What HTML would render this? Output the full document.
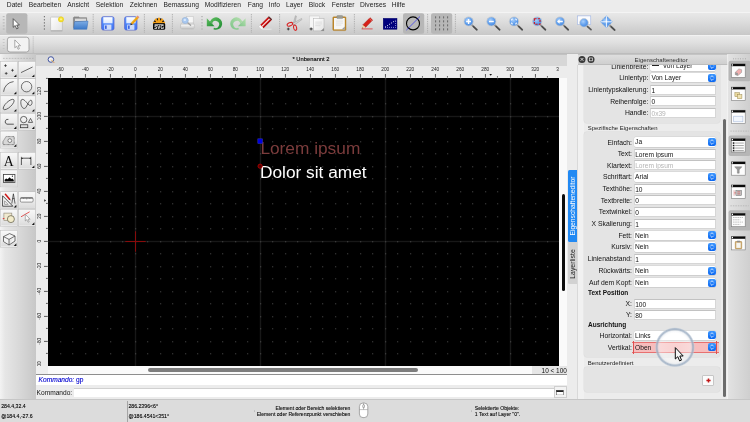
<!DOCTYPE html><html><head><meta charset="utf-8"><title>QCAD</title><style>
*{box-sizing:border-box;margin:0;padding:0}
html,body{width:750px;height:422px;overflow:hidden;background:#ececec}
body{position:relative;transform:translateZ(0);will-change:transform;font-family:"Liberation Sans",sans-serif;color:#1a1a1a;font-size:6.5px;line-height:1}
.a{position:absolute}
.t{position:absolute;white-space:nowrap;line-height:1}
.menu span{position:absolute;top:2.2px;font-size:6.7px;color:#1c1c1c;white-space:nowrap}
.tb1{left:0;top:12px;width:750px;height:22.6px;background:linear-gradient(#e8e8e8,#dedede 35%,#c8c8c8);border-top:0.6px solid #f4f4f4}
.tb2{left:0;top:34.6px;width:750px;height:19.2px;background:linear-gradient(#e9e9e9,#dfdfdf 40%,#cacaca);border-top:0.6px solid #f2f2f2;border-bottom:0.6px solid #bcbcbc}
.sel{background:#b9b9b9;border-radius:2px}
.sep{width:0;border-left:0.7px dotted #8a8a8a}
.lb{position:absolute;width:16.6px;height:16.6px;background:linear-gradient(#f7f7f7,#ececec 45%,#dadada);border:0.5px solid #fbfbfb;box-shadow:0 0 0 0.4px #c4c4c4}
.lb i{position:absolute;right:0.8px;bottom:0.8px;width:0;height:0;border-left:2.6px solid transparent;border-bottom:2.6px solid #111}
.lab{position:absolute;font-size:6.8px;text-align:right;white-space:nowrap;color:#111}
.inp{position:absolute;left:650px;width:66px;height:10px;background:#fff;border:0.5px solid #d6d6d6;border-top-color:#c2c2c2;font-size:6.6px;line-height:10.2px;padding-left:0.7px;overflow:hidden;white-space:nowrap;color:#111}
.cmb{position:absolute;left:650px;width:66px;height:9.4px;background:#fff;border-radius:2px;box-shadow:0 0 0 0.4px #cfcfcf,0 0.5px 0.6px #b8b8b8;font-size:6.6px;line-height:10.8px;padding-left:1.6px;white-space:nowrap;color:#111}
.cmb b{position:absolute;right:0.6px;top:0.7px;width:8px;height:8px;border-radius:2px;background:linear-gradient(#3e98ff,#0a66f0)}
</style></head><body>
<div class="a menu" style="left:0;top:0;width:750px;height:11.5px;background:#ececec">
<span style="left:6.8px">Datei</span>
<span style="left:28.8px">Bearbeiten</span>
<span style="left:67.3px">Ansicht</span>
<span style="left:95.8px">Selektion</span>
<span style="left:129.8px">Zeichnen</span>
<span style="left:163.6px">Bemassung</span>
<span style="left:204.8px">Modifizieren</span>
<span style="left:247.8px">Fang</span>
<span style="left:268.8px">Info</span>
<span style="left:286px">Layer</span>
<span style="left:308.8px">Block</span>
<span style="left:331.8px">Fenster</span>
<span style="left:360px">Diverses</span>
<span style="left:391.8px">Hilfe</span>
</div>
<div class="a tb1"></div><div class="a tb2"></div>
<svg class="a" style="left:0px;top:11.5px" width="750" height="42.5" viewBox="0 11.5 750 42.5"><defs><radialGradient id="lens" cx="0.4" cy="0.35" r="0.75"><stop offset="0" stop-color="#a8cffb"/><stop offset="0.55" stop-color="#5e9dec"/><stop offset="1" stop-color="#4b88da"/></radialGradient><linearGradient id="fold" x1="0" y1="0" x2="0" y2="1"><stop offset="0" stop-color="#7eaee6"/><stop offset="1" stop-color="#3b78c8"/></linearGradient><linearGradient id="sheet" x1="0" y1="0" x2="1" y2="1"><stop offset="0" stop-color="#ffffff"/><stop offset="1" stop-color="#e4e4e4"/></linearGradient><linearGradient id="flop" x1="0" y1="0" x2="0" y2="1"><stop offset="0" stop-color="#5f98ff"/><stop offset="1" stop-color="#3f74f4"/></linearGradient><radialGradient id="glow"><stop offset="0" stop-color="#ffffc0"/><stop offset="0.45" stop-color="#f6e23a"/><stop offset="1" stop-color="#e8d020"/></radialGradient></defs><rect x="6.2" y="12.8" width="21.2" height="20.4" rx="2" fill="#b7b7b7"/><rect x="403" y="12.8" width="21.2" height="20.4" rx="2" fill="#b7b7b7"/><rect x="431" y="12.8" width="21.2" height="20.4" rx="2" fill="#b7b7b7"/><rect x="2.75" y="15.799999999999999" width="1.9" height="0.8" fill="#adadad"/><rect x="2.75" y="18.900000000000002" width="1.9" height="0.8" fill="#adadad"/><rect x="2.75" y="22.0" width="1.9" height="0.8" fill="#adadad"/><rect x="2.75" y="25.0" width="1.9" height="0.8" fill="#adadad"/><rect x="2.75" y="28.1" width="1.9" height="0.8" fill="#adadad"/><rect x="43.85" y="15.649999999999999" width="1.1" height="1.1" fill="#5c5c5c"/><rect x="43.85" y="18.75" width="1.1" height="1.1" fill="#5c5c5c"/><rect x="43.85" y="21.849999999999998" width="1.1" height="1.1" fill="#5c5c5c"/><rect x="43.85" y="24.849999999999998" width="1.1" height="1.1" fill="#5c5c5c"/><rect x="43.85" y="27.95" width="1.1" height="1.1" fill="#5c5c5c"/><rect x="201.05" y="15.799999999999999" width="1.9" height="0.8" fill="#adadad"/><rect x="201.05" y="18.900000000000002" width="1.9" height="0.8" fill="#adadad"/><rect x="201.05" y="22.0" width="1.9" height="0.8" fill="#adadad"/><rect x="201.05" y="25.0" width="1.9" height="0.8" fill="#adadad"/><rect x="201.05" y="28.1" width="1.9" height="0.8" fill="#adadad"/><path d="M93.2 13.5V32.5" stroke="#acacac" stroke-width="0.9" stroke-dasharray="1.3 1"/><path d="M144.4 13.5V32.5" stroke="#acacac" stroke-width="0.9" stroke-dasharray="1.3 1"/><path d="M172.4 13.5V32.5" stroke="#acacac" stroke-width="0.9" stroke-dasharray="1.3 1"/><path d="M251.4 13.5V32.5" stroke="#acacac" stroke-width="0.9" stroke-dasharray="1.3 1"/><path d="M279.6 13.5V32.5" stroke="#acacac" stroke-width="0.9" stroke-dasharray="1.3 1"/><path d="M354.4 13.5V32.5" stroke="#acacac" stroke-width="0.9" stroke-dasharray="1.3 1"/><path d="M427.6 13.5V32.5" stroke="#acacac" stroke-width="0.9" stroke-dasharray="1.3 1"/><path d="M455.4 13.5V32.5" stroke="#acacac" stroke-width="0.9" stroke-dasharray="1.3 1"/><path d="M13.20 18.20 L13.20 26.80 L15.20 25.00 L16.70 28.40 L18.20 27.70 L16.70 24.50 L19.40 24.50Z" fill="#fff" stroke="#333" stroke-width="0.7" stroke-linejoin="round"/><rect x="50.6" y="16.6" width="11.8" height="13.6" rx="0.8" fill="url(#sheet)" stroke="#b5b5b5" stroke-width="0.6"/><path d="M50.8 30.4H62.4" stroke="#9a9a9a" stroke-width="0.6"/><circle cx="61" cy="18.8" r="2.9" fill="url(#glow)"/><path d="M73.4 17.2L74 16.4H79L79.6 17.2H86.6V27H73.4Z" fill="#8f8f8f" stroke="#6e6e6e" stroke-width="0.5"/><path d="M75 18.2H86V20.4H75Z" fill="#ededed"/><path d="M75 19.3H86" stroke="#a8a8a8" stroke-width="0.4"/><path d="M74.6 21.2L88 20.6L86.8 28.8H73.6Z" fill="url(#fold)" stroke="#3a6fb8" stroke-width="0.5" stroke-linejoin="round"/><defs><linearGradient id="flab" x1="0" y1="0" x2="0" y2="1"><stop offset="0" stop-color="#ffffff"/><stop offset="1" stop-color="#dbe8ff"/></linearGradient></defs><rect x="101.60000000000001" y="16.2" width="12.4" height="13.4" rx="1.8" fill="url(#flop)" stroke="#5360c8" stroke-width="0.7"/><rect x="103.30000000000001" y="16.7" width="9.2" height="6.1" fill="url(#flab)"/><rect x="104.2" y="24.1" width="7.2" height="5.2" fill="#cfdcf8"/><rect x="105.0" y="25" width="1.7" height="3.4" fill="#3f66e0"/><rect x="124.60000000000001" y="16.2" width="12.4" height="13.4" rx="1.8" fill="url(#flop)" stroke="#5360c8" stroke-width="0.7"/><rect x="126.30000000000001" y="16.7" width="9.2" height="6.1" fill="url(#flab)"/><rect x="127.2" y="24.1" width="7.2" height="5.2" fill="#cfdcf8"/><rect x="128.0" y="25" width="1.7" height="3.4" fill="#3f66e0"/><g transform="translate(130.3 24.8) rotate(-47.5)"><path d="M0 0L2.2 -1.2V1.2Z" fill="#3a2a1a"/><rect x="2.2" y="-1.25" width="8.6" height="2.5" fill="#f5b324"/><rect x="2.2" y="-0.2" width="8.6" height="0.9" fill="#e89a10"/><rect x="10.8" y="-1.25" width="1.3" height="2.5" fill="#e88a78"/></g><path d="M153 24A6 6.4 0 0 1 165 24Z" fill="#1a1208"/><path d="M157.84 23.31L153.86 22.25M158.26 22.65L155.74 19.19M159.00 22.40L159.00 18.00M159.74 22.65L162.26 19.19M160.16 23.31L164.14 22.25" stroke="#f5a21c" stroke-width="2.1" stroke-linecap="round"/><path d="M155.6 23.6A3.4 3.4 0 0 1 162.4 23.6Z" fill="#f5a21c"/><rect x="153" y="22.6" width="12.2" height="6.6" rx="1.5" fill="#080808"/><path d="M154.6 23.9H163.6" stroke="#d8d8d8" stroke-width="0.8"/><text x="159.1" y="28.5" font-size="4.7" font-weight="bold" fill="#f4f4f4" text-anchor="middle" font-family="Liberation Sans">SVG</text><rect x="186.2" y="16.2" width="7" height="6.6" fill="#f6f6f6" stroke="#c4c4c4" stroke-width="0.5"/><path d="M181.6 22.4H193.4L194.2 24V27.6H180.6V24Z" fill="#dcdcdc" stroke="#b4b4b4" stroke-width="0.5"/><path d="M181 25.2H194" stroke="#f6f6f6" stroke-width="0.8"/><path d="M181.4 28.4H193.6" stroke="#bcbcbc" stroke-width="0.9"/><path d="M187.4 22L190.6 24.8" stroke="#a0a0a0" stroke-width="1.3" stroke-linecap="round"/><circle cx="185.2" cy="20" r="3.1" fill="#a8c8f0" stroke="#9cb4d4" stroke-width="0.7"/><circle cx="184.8" cy="19.4" r="1.2" fill="#d8e8fb"/><defs><linearGradient id="gu" x1="0" y1="0" x2="1" y2="1"><stop offset="0" stop-color="#62c062"/><stop offset="1" stop-color="#1c8a30"/></linearGradient><linearGradient id="gr" x1="0" y1="0" x2="1" y2="1"><stop offset="0" stop-color="#b8e0b0"/><stop offset="1" stop-color="#7cc488"/></linearGradient></defs><g fill="url(#gu)"><path d="M209.4 20.4L210.38 20.38A6.2 6.2 0 1 1 213.4 28.7L213.98 27.36A3.6 3.6 0 1 0 212.24 22.58L212.8 23.9Z"/><path d="M206.8 17.7V25.7H214.5Z"/></g><g transform="translate(472.8 0) scale(-1 1)" fill="url(#gr)"><path d="M229.8 20.4L230.78 20.38A6.2 6.2 0 1 1 233.8 28.7L234.38 27.36A3.6 3.6 0 1 0 232.64000000000001 22.58L233.20000000000002 23.9Z"/><path d="M227.20000000000002 17.7V25.7H234.9Z"/></g><path d="M262 28.7H271.6" stroke="#e6e6e6" stroke-width="1"/><g transform="translate(260.1 27.7) rotate(-45)"><rect x="0" y="-2.3" width="2.8" height="4.6" rx="0.8" fill="#f6f6f6" stroke="#b8b8b8" stroke-width="0.4"/><rect x="2.6" y="-2.3" width="11" height="4.6" fill="#cc1212"/><rect x="2.6" y="-0.55" width="11" height="1.2" fill="#fbeaea"/><rect x="2.6" y="1.5" width="11" height="0.8" fill="#a00808"/><rect x="13.4" y="-2.3" width="1.4" height="4.6" rx="0.4" fill="#5a2424"/></g><path d="M293 24L295.4 15.2L296.4 15.6L294.6 24.6Z" fill="#c8c8c8" stroke="#8e8e8e" stroke-width="0.4"/><path d="M292.6 23L301.6 18L302 19L294 24.6Z" fill="#d4d4d4" stroke="#8e8e8e" stroke-width="0.4"/><ellipse cx="289.9" cy="23.8" rx="2.9" ry="1.6" transform="rotate(-22 289.9 23.8)" fill="none" stroke="#d82424" stroke-width="1.05"/><ellipse cx="295.1" cy="27.2" rx="1.5" ry="2.7" transform="rotate(-12 295.1 27.2)" fill="none" stroke="#d82424" stroke-width="1.05"/><path d="M286.9 28.5H289.7M288.3 27.1V29.9" stroke="#111" stroke-width="0.7"/><rect x="309.4" y="15.5" width="10.2" height="12.6" fill="#f6f6f6" stroke="#c6c6c6" stroke-width="0.5"/><rect x="313.4" y="18.2" width="10.6" height="12.2" fill="url(#sheet)" stroke="#b0b0b0" stroke-width="0.5"/><path d="M315.2 21.6H322M315.2 23.4H322M315.2 25.2H320.6" stroke="#cdcdcd" stroke-width="0.5"/><path d="M320.6 30.4L324 27.6V30.4Z" fill="#8e8e8e"/><path d="M309.6 28.4H312.6M311.1 26.9V29.9" stroke="#111" stroke-width="0.7"/><rect x="332.8" y="16.3" width="13.2" height="13.8" rx="1" fill="#bf8a2c" stroke="#a87418" stroke-width="0.4"/><rect x="334" y="17.5" width="10.8" height="11.4" fill="#f6f6f6"/><path d="M336 20.6H343M336 22.6H343M336 24.6H341.4" stroke="#cfcfcf" stroke-width="0.5"/><path d="M341.6 28.9L344.8 26V28.9Z" fill="#9a9a9a"/><rect x="336.8" y="15" width="6" height="3.1" rx="0.9" fill="#9c9c94" stroke="#84847c" stroke-width="0.4"/><path d="M370 17.2L372.6 19.6L365.6 26.8L362.8 24.4Z" fill="#d82018" stroke="#9c1008" stroke-width="0.5"/><path d="M362.8 24.4L365.6 26.8L361.8 28Z" fill="#f2d0a0"/><path d="M361.8 28L362.6 26.9L363.2 27.6Z" fill="#222"/><path d="M369.4 18.2L371.8 20.4" stroke="#f6b0a8" stroke-width="0.5"/><path d="M361.6 28.4H372.6" stroke="#e02020" stroke-width="0.7"/><rect x="383.2" y="17.8" width="13.8" height="11" fill="#00007c" stroke="#000060" stroke-width="0.4"/><path d="M385.2 26.6L395.6 19.8" stroke="#ffffff" stroke-width="1" stroke-dasharray="1 1.4"/><path d="M385 26.9H395.6V19.6" fill="none" stroke="#b8b8f4" stroke-width="0.8" stroke-dasharray="0.9 1.1"/><circle cx="413" cy="22.9" r="6.5" fill="none" stroke="#000" stroke-width="1.1"/><path d="M406.4 29.6L420 16" stroke="#1c1cff" stroke-width="0.6"/><path d="M435.6 15.8V30" stroke="#5c5c5c" stroke-width="0.85" stroke-dasharray="2.1 1.9"/><path d="M439.6 15.8V30" stroke="#5c5c5c" stroke-width="0.85" stroke-dasharray="2.1 1.9"/><path d="M443.6 15.8V30" stroke="#5c5c5c" stroke-width="0.85" stroke-dasharray="2.1 1.9"/><path d="M447.6 15.8V30" stroke="#5c5c5c" stroke-width="0.85" stroke-dasharray="2.1 1.9"/><path d="M471.8 24.4L476.8 29.2" stroke="#8a8a8a" stroke-width="1.9" stroke-linecap="round"/><path d="M473.40000000000003 26L476.8 29.2" stroke="#4a4a4a" stroke-width="1.5" stroke-linecap="round"/><circle cx="468.6" cy="21" r="4.6" fill="url(#lens)" stroke="#c4c8cc" stroke-width="0.8"/><path d="M466.20000000000005 21H471.0M468.6 18.6V23.4" stroke="#fff" stroke-width="1.4"/><path d="M494.59999999999997 24.4L499.59999999999997 29.2" stroke="#8a8a8a" stroke-width="1.9" stroke-linecap="round"/><path d="M496.2 26L499.59999999999997 29.2" stroke="#4a4a4a" stroke-width="1.5" stroke-linecap="round"/><circle cx="491.4" cy="21" r="4.6" fill="url(#lens)" stroke="#c4c8cc" stroke-width="0.8"/><path d="M489.0 21H493.79999999999995" stroke="#fff" stroke-width="1.4"/><path d="M517.2 24.4L522.2 29.2" stroke="#8a8a8a" stroke-width="1.9" stroke-linecap="round"/><path d="M518.8 26L522.2 29.2" stroke="#4a4a4a" stroke-width="1.5" stroke-linecap="round"/><circle cx="514" cy="21" r="4.6" fill="url(#lens)" stroke="#c4c8cc" stroke-width="0.8"/><path d="M511.6 20V18.6H513M515 18.6H516.4V20M516.4 22V23.4H515M513 23.4H511.6V22" fill="none" stroke="#fff" stroke-width="0.9"/><path d="M540.4000000000001 24.4L545.4000000000001 29.2" stroke="#8a8a8a" stroke-width="1.9" stroke-linecap="round"/><path d="M542.0 26L545.4000000000001 29.2" stroke="#4a4a4a" stroke-width="1.5" stroke-linecap="round"/><circle cx="537.2" cy="21" r="4.6" fill="url(#lens)" stroke="#c4c8cc" stroke-width="0.8"/><rect x="534.4000000000001" y="18.2" width="5.6" height="5.6" fill="none" stroke="#d81818" stroke-width="1.1" stroke-dasharray="2.2 1.2"/><path d="M563.2 24.4L568.2 29.2" stroke="#8a8a8a" stroke-width="1.9" stroke-linecap="round"/><path d="M564.8 26L568.2 29.2" stroke="#4a4a4a" stroke-width="1.5" stroke-linecap="round"/><circle cx="560" cy="21" r="4.6" fill="url(#lens)" stroke="#c4c8cc" stroke-width="0.8"/><path d="M557 21L559.6 18.8V20.2H562.8V21.8H559.6V23.2Z" fill="#fff"/><rect x="577.4" y="15.4" width="13.4" height="8.8" fill="#fafbfe" stroke="#8aa4dc" stroke-width="0.5"/><path d="M587 25.6L591 29.2" stroke="#5a5a5a" stroke-width="1.7" stroke-linecap="round"/><circle cx="584" cy="22.3" r="4.3" fill="url(#lens)" stroke="#c4c8cc" stroke-width="0.7"/><path d="M609.6 24.7L614.6 29.5" stroke="#8a8a8a" stroke-width="1.9" stroke-linecap="round"/><path d="M611.1999999999999 26.3L614.6 29.5" stroke="#4a4a4a" stroke-width="1.5" stroke-linecap="round"/><circle cx="606.4" cy="21.3" r="4.6" fill="url(#lens)" stroke="#c4c8cc" stroke-width="0.8"/><path d="M600.1999999999999 21.3l2.6 -2.4v4.8zM612.6 21.3l-2.6 -2.4v4.8zM606.4 15.100000000000001l-2.4 2.6h4.8zM606.4 27.5l-2.4 -2.6h4.8z" fill="#5e9dec"/><path d="M600.8 21.3H612.0M606.4 15.700000000000001V26.9" stroke="#fff" stroke-width="0.9"/><rect x="2.75" y="38.5" width="1.9" height="0.8" fill="#c2c2c2"/><rect x="2.75" y="41.6" width="1.9" height="0.8" fill="#c2c2c2"/><rect x="2.75" y="44.6" width="1.9" height="0.8" fill="#c2c2c2"/><rect x="2.75" y="47.6" width="1.9" height="0.8" fill="#c2c2c2"/><path d="M33.2 36V52.5" stroke="#9c9c9c" stroke-width="0.7" stroke-dasharray="0.9 1.1"/><rect x="7.4" y="36.7" width="21.6" height="14.8" rx="2.6" fill="#f2f2f2" stroke="#8a8a8a" stroke-width="0.7"/><path d="M14.80 39.40 L14.80 47.31 L16.64 45.66 L18.02 48.78 L19.40 48.14 L18.02 45.20 L20.50 45.20Z" fill="#fcfcfc" stroke="#777" stroke-width="0.6" stroke-linejoin="round"/></svg>
<div class="a" style="left:0;top:53.5px;width:36px;height:345px;background:linear-gradient(90deg,#f3f3f3,#e6e6e6 14%,#d8d8d8 55%,#c7c7c7)"></div>
<svg class="a" style="left:0;top:57px" width="36" height="3" viewBox="0 57 36 3"><path d="M3 58.4H33.5" stroke="#a6a6a6" stroke-width="0.6" stroke-dasharray="1.7 1.2"/></svg>
<svg class="a" style="left:0px;top:60px" width="37" height="190" viewBox="0 60 37 190"><defs><linearGradient id="lbg" x1="0" y1="0" x2="0" y2="1"><stop offset="0" stop-color="#f8f8f8"/><stop offset="0.5" stop-color="#ececec"/><stop offset="1" stop-color="#dadada"/></linearGradient></defs><rect x="0.9" y="61.8" width="16.3" height="16.0" fill="url(#lbg)" stroke="#fdfdfd" stroke-width="0.5"/><rect x="0.45" y="61.349999999999994" width="17.2" height="16.9" fill="none" stroke="#bcbcbc" stroke-width="0.5"/><path d="M16.4 74.39999999999999V77.0H13.799999999999999Z" fill="#111"/><rect x="18.9" y="61.8" width="16.3" height="16.0" fill="url(#lbg)" stroke="#fdfdfd" stroke-width="0.5"/><rect x="18.45" y="61.349999999999994" width="17.2" height="16.9" fill="none" stroke="#bcbcbc" stroke-width="0.5"/><path d="M34.400000000000006 74.39999999999999V77.0H31.800000000000004Z" fill="#111"/><rect x="0.9" y="79.0" width="16.3" height="16.0" fill="url(#lbg)" stroke="#fdfdfd" stroke-width="0.5"/><rect x="0.45" y="78.55" width="17.2" height="16.9" fill="none" stroke="#bcbcbc" stroke-width="0.5"/><path d="M16.4 91.6V94.2H13.799999999999999Z" fill="#111"/><rect x="18.9" y="79.0" width="16.3" height="16.0" fill="url(#lbg)" stroke="#fdfdfd" stroke-width="0.5"/><rect x="18.45" y="78.55" width="17.2" height="16.9" fill="none" stroke="#bcbcbc" stroke-width="0.5"/><path d="M34.400000000000006 91.6V94.2H31.800000000000004Z" fill="#111"/><rect x="0.9" y="96.3" width="16.3" height="16.0" fill="url(#lbg)" stroke="#fdfdfd" stroke-width="0.5"/><rect x="0.45" y="95.85" width="17.2" height="16.9" fill="none" stroke="#bcbcbc" stroke-width="0.5"/><path d="M16.4 108.89999999999999V111.5H13.799999999999999Z" fill="#111"/><rect x="18.9" y="96.3" width="16.3" height="16.0" fill="url(#lbg)" stroke="#fdfdfd" stroke-width="0.5"/><rect x="18.45" y="95.85" width="17.2" height="16.9" fill="none" stroke="#bcbcbc" stroke-width="0.5"/><path d="M34.400000000000006 108.89999999999999V111.5H31.800000000000004Z" fill="#111"/><rect x="0.9" y="113.7" width="16.3" height="16.0" fill="url(#lbg)" stroke="#fdfdfd" stroke-width="0.5"/><rect x="0.45" y="113.25" width="17.2" height="16.9" fill="none" stroke="#bcbcbc" stroke-width="0.5"/><path d="M16.4 126.29999999999998V128.89999999999998H13.799999999999999Z" fill="#111"/><rect x="18.9" y="113.7" width="16.3" height="16.0" fill="url(#lbg)" stroke="#fdfdfd" stroke-width="0.5"/><rect x="18.45" y="113.25" width="17.2" height="16.9" fill="none" stroke="#bcbcbc" stroke-width="0.5"/><path d="M34.400000000000006 126.29999999999998V128.89999999999998H31.800000000000004Z" fill="#111"/><rect x="0.9" y="131.6" width="16.3" height="16.0" fill="url(#lbg)" stroke="#fdfdfd" stroke-width="0.5"/><rect x="0.45" y="131.15" width="17.2" height="16.9" fill="none" stroke="#bcbcbc" stroke-width="0.5"/><path d="M16.4 144.2V146.79999999999998H13.799999999999999Z" fill="#111"/><rect x="0.9" y="152.8" width="16.3" height="16.0" fill="url(#lbg)" stroke="#fdfdfd" stroke-width="0.5"/><rect x="0.45" y="152.35000000000002" width="17.2" height="16.9" fill="none" stroke="#bcbcbc" stroke-width="0.5"/><rect x="18.9" y="152.8" width="16.3" height="16.0" fill="url(#lbg)" stroke="#fdfdfd" stroke-width="0.5"/><rect x="18.45" y="152.35000000000002" width="17.2" height="16.9" fill="none" stroke="#bcbcbc" stroke-width="0.5"/><path d="M34.400000000000006 165.4V168.0H31.800000000000004Z" fill="#111"/><rect x="0.9" y="170.4" width="16.3" height="16.0" fill="url(#lbg)" stroke="#fdfdfd" stroke-width="0.5"/><rect x="0.45" y="169.95000000000002" width="17.2" height="16.9" fill="none" stroke="#bcbcbc" stroke-width="0.5"/><rect x="0.9" y="192.2" width="16.3" height="16.0" fill="url(#lbg)" stroke="#fdfdfd" stroke-width="0.5"/><rect x="0.45" y="191.75" width="17.2" height="16.9" fill="none" stroke="#bcbcbc" stroke-width="0.5"/><path d="M16.4 204.79999999999998V207.39999999999998H13.799999999999999Z" fill="#111"/><rect x="18.9" y="192.2" width="16.3" height="16.0" fill="url(#lbg)" stroke="#fdfdfd" stroke-width="0.5"/><rect x="18.45" y="191.75" width="17.2" height="16.9" fill="none" stroke="#bcbcbc" stroke-width="0.5"/><rect x="0.9" y="209.7" width="16.3" height="16.0" fill="url(#lbg)" stroke="#fdfdfd" stroke-width="0.5"/><rect x="0.45" y="209.25" width="17.2" height="16.9" fill="none" stroke="#bcbcbc" stroke-width="0.5"/><rect x="18.9" y="209.7" width="16.3" height="16.0" fill="url(#lbg)" stroke="#fdfdfd" stroke-width="0.5"/><rect x="18.45" y="209.25" width="17.2" height="16.9" fill="none" stroke="#bcbcbc" stroke-width="0.5"/><path d="M34.400000000000006 222.29999999999998V224.89999999999998H31.800000000000004Z" fill="#111"/><rect x="0.9" y="230.7" width="16.3" height="16.0" fill="url(#lbg)" stroke="#fdfdfd" stroke-width="0.5"/><rect x="0.45" y="230.25" width="17.2" height="16.9" fill="none" stroke="#bcbcbc" stroke-width="0.5"/><path d="M16.4 243.29999999999998V245.89999999999998H13.799999999999999Z" fill="#111"/><path d="M4.1 65.6H6.9M5.5 64.19999999999999V67.0" stroke="#111" stroke-width="0.6"/><path d="M11.1 70.3H13.9M12.5 68.89999999999999V71.7" stroke="#111" stroke-width="0.6"/><path d="M4.800000000000001 73.4H7.6M6.2 72.0V74.80000000000001" stroke="#111" stroke-width="0.6"/><path d="M21 72.6L32.6 67" stroke="#2c2c2c" stroke-width="0.7" fill="none"/><path d="M3.6 91.8A11 11 0 0 1 13.6 81.6" stroke="#444" stroke-width="0.8" fill="none"/><circle cx="26.6" cy="86.7" r="5.2" stroke="#444" stroke-width="0.75" fill="none"/><ellipse cx="8.7" cy="104.5" rx="7" ry="2.7" transform="rotate(-43 8.7 104.5)" stroke="#333" stroke-width="0.7" fill="none"/><path d="M21.2 100C19.6 105 23.4 111.4 26.2 107C27.8 104 30.2 98.4 31.6 100.6C33 103.4 31 106.6 29 105C26.4 102.6 23.4 97.6 21.2 100Z" stroke="#2c2c2c" stroke-width="0.7" fill="none"/><path d="M8.4 119.4A2.45 2.45 0 0 0 7 124.2H13.8" stroke="#333" stroke-width="0.8" fill="none"/><circle cx="23.7" cy="119.6" r="3.2" stroke="#2c2c2c" stroke-width="0.7" fill="none"/><path d="M28.4 122.4H32.6L30.5 118.4Z" stroke="#2c2c2c" stroke-width="0.7" fill="none"/><rect x="20.4" y="124.8" width="7.4" height="2.9" stroke="#2c2c2c" stroke-width="0.7" fill="none"/><path d="M3 141.6L6 136.6H14.2V144.6H3Z" fill="#d8d8d8" stroke="#444" stroke-width="0.7" stroke-dasharray="0.8 0.5"/><circle cx="9.8" cy="140.6" r="1.9" fill="#f4f4f4" stroke="#444" stroke-width="0.6"/><text x="8.8" y="165.7" font-family="Liberation Serif" font-size="13.8" text-anchor="middle" fill="#0a0a0a">A</text><path d="M21.4 165V158.2H30.9V165" stroke="#333" stroke-width="0.8" fill="none"/><path d="M21.4 157.4l1.8 0.8l-1.8 0.8zM30.9 157.4l-1.8 0.8l1.8 0.8z" fill="#111"/><path d="M21.4 156.8V158M30.9 156.8V158" stroke="#333" stroke-width="0.6"/><rect x="3.5" y="174.4" width="11.4" height="8.2" fill="#fff" stroke="#3c3c3c" stroke-width="0.8"/><path d="M4.6 181.6V179.8L6.2 178.4L7.6 179.2L9.6 177.2L11.2 179L12.4 178.4L13.8 180V181.6Z" fill="#0a0a0a"/><circle cx="12.4" cy="176.2" r="0.6" fill="#111"/><path d="M2.6 195.8V206.2H12.8Z" fill="#f6f6f6" stroke="#2a2a2a" stroke-width="0.8"/><path d="M4.6 200.8V204.4H8.2Z" fill="none" stroke="#555" stroke-width="0.5"/><path d="M5.4 194.2L9.6 199.2" stroke="#d01818" stroke-width="1.5" stroke-linecap="round"/><path d="M9.6 199.2L10.6 200.4" stroke="#333" stroke-width="0.7"/><path d="M13.4 193.8L11.8 203.6M13.4 193.8L15 203.6M12.4 198.6H14.4" stroke="#2a2a2a" stroke-width="0.7" fill="none"/><rect x="20.3" y="197.8" width="12.8" height="4.3" rx="1.2" fill="#fafafa" stroke="#5a5a5a" stroke-width="0.6"/><path d="M20.6 198H32.8" stroke="#222" stroke-width="0.7"/><path d="M26.7 198V199.6M23.6 198V199M29.8 198V199" stroke="#555" stroke-width="0.4"/><rect x="3.9" y="213.1" width="7.9" height="7.4" fill="#f1ead0" stroke="#8c8474" stroke-width="0.6"/><circle cx="10.9" cy="219.1" r="3.5" fill="#f3eccb" stroke="#5a5840" stroke-width="0.7"/><path d="M2.8 218.6H4.4" stroke="#e02020" stroke-width="0.9"/><path d="M21 216.8L29.6 211.8" stroke="#e03030" stroke-width="0.8"/><path d="M25.30 214.30 L25.30 221.01 L26.86 219.60 L28.03 222.26 L29.20 221.71 L28.03 219.21 L30.14 219.21Z" fill="#fbfbfb" stroke="#7a7a7a" stroke-width="0.55" stroke-linejoin="round"/><path d="M3.5 236.6L9.6 233.6L15 236L9 239.4ZM3.5 236.6V241.6L9 245V239.4M9 245L15 241V236" stroke="#3a3a3a" stroke-width="0.7" fill="#f4f4f4" stroke-linejoin="round"/></svg>
<div class="a" style="left:36px;top:53.5px;width:531px;height:12.5px;background:#d7d7d7;border-top:0.6px solid #c2c2c2"></div>
<div class="t" style="left:292px;top:57.2px;font-size:5.8px;color:#000;width:38px;text-align:center;-webkit-text-stroke:0.12px #000">* Unbenannt 2</div>
<svg class="a" style="left:46px;top:55px" width="10" height="9" viewBox="46 55 10 9"><circle cx="50.9" cy="59.5" r="2.8" fill="#e8eaf2" stroke="#4456a0" stroke-width="1"/><circle cx="50.4" cy="59.2" r="1.1" fill="#fafafa"/><path d="M51.2 59.8L53.6 62.2" stroke="#eeb040" stroke-width="0.9" stroke-linecap="round"/><path d="M53.5 62.1L54 62.7" stroke="#c86040" stroke-width="0.7"/></svg>
<div class="a" style="left:36px;top:66px;width:531px;height:11.5px;background:#ececec"></div>
<div class="a" style="left:36px;top:66px;width:11.5px;height:300px;background:#ececec"></div>
<svg class="a" style="left:47.8px;top:77.7px" width="511.2" height="288.1" viewBox="47.8 77.7 511.2 288.1">
<defs><pattern id="dots" x="135" y="241" width="25" height="25" patternUnits="userSpaceOnUse"><path d="M0 0h1v1h-1zM12 0h1v1h-1zM0 12h1v1h-1zM12 12h1v1h-1z" fill="#525252"/></pattern></defs>
<rect x="47.8" y="77.7" width="511.2" height="288.1" fill="#000"/>
<rect x="134.60000000000002" y="77.7" width="1.4" height="288.1" fill="#181818"/>
<rect x="259.6" y="77.7" width="1.4" height="288.1" fill="#181818"/>
<rect x="384.6" y="77.7" width="1.4" height="288.1" fill="#181818"/>
<rect x="509.6" y="77.7" width="1.4" height="288.1" fill="#181818"/>
<rect x="47.8" y="240.5" width="511.2" height="1.4" fill="#181818"/>
<rect x="47.8" y="115.49999999999999" width="511.2" height="1.4" fill="#181818"/>
<rect x="47.8" y="77.7" width="511.2" height="288.1" fill="url(#dots)"/>
<path d="M125.1 241.2H145.5M135.3 231V251.4" stroke="#8a0c0c" stroke-width="1" fill="none"/>
<text x="260.2" y="153.4" font-family="Liberation Sans" font-size="17.3" fill="#7c3c3c">Lorem ipsum</text>
<text x="259.8" y="178.2" font-family="Liberation Sans" font-size="17.3" fill="#fff">Dolor sit amet</text>
<rect x="257.6" y="138.5" width="4.8" height="4.8" fill="#0000e0" stroke="#3a3aa0" stroke-width="0.5"/>
<circle cx="259.9" cy="165.9" r="2.1" fill="#500" stroke="#b00000" stroke-width="0.9"/>
</svg>
<svg class="a" style="left:36px;top:66px" width="523.2" height="299.8" viewBox="36 66 523.2 299.8">
<path d="M60.45 74V77.6 M72.45 76.1V77.6 M85.45 74V77.6 M97.45 76.1V77.6 M110.45 74V77.6 M122.45 76.1V77.6 M135.45 74V77.6 M147.45 76.1V77.6 M160.45 74V77.6 M172.45 76.1V77.6 M185.45 74V77.6 M197.45 76.1V77.6 M210.45 74V77.6 M222.45 76.1V77.6 M235.45 74V77.6 M247.45 76.1V77.6 M260.45 74V77.6 M272.45 76.1V77.6 M285.45 74V77.6 M297.45 76.1V77.6 M310.45 74V77.6 M322.45 76.1V77.6 M335.45 74V77.6 M347.45 76.1V77.6 M360.45 74V77.6 M372.45 76.1V77.6 M385.45 74V77.6 M397.45 76.1V77.6 M410.45 74V77.6 M422.45 76.1V77.6 M435.45 74V77.6 M447.45 76.1V77.6 M460.45 74V77.6 M472.45 76.1V77.6 M485.45 74V77.6 M497.45 76.1V77.6 M510.45 74V77.6 M522.45 76.1V77.6 M535.45 74V77.6 M547.45 76.1V77.6 M46 353.4H47.8 M44 341.4H47.8 M46 328.4H47.8 M44 316.4H47.8 M46 303.4H47.8 M44 291.4H47.8 M46 278.4H47.8 M44 266.4H47.8 M46 253.4H47.8 M44 241.4H47.8 M46 228.4H47.8 M44 216.4H47.8 M46 203.4H47.8 M44 191.4H47.8 M46 178.4H47.8 M44 166.4H47.8 M46 153.4H47.8 M44 141.4H47.8 M46 128.4H47.8 M44 116.4H47.8 M46 103.4H47.8 M44 91.4H47.8 M46 78.4H47.8" stroke="#2a2a2a" stroke-width="0.75" fill="none"/>
<text x="60.30000000000001" y="71" font-size="4.8" text-anchor="middle" fill="#222" font-family="Liberation Sans">-60</text>
<text x="85.30000000000001" y="71" font-size="4.8" text-anchor="middle" fill="#222" font-family="Liberation Sans">-40</text>
<text x="110.30000000000001" y="71" font-size="4.8" text-anchor="middle" fill="#222" font-family="Liberation Sans">-20</text>
<text x="135.3" y="71" font-size="4.8" text-anchor="middle" fill="#222" font-family="Liberation Sans">0</text>
<text x="160.3" y="71" font-size="4.8" text-anchor="middle" fill="#222" font-family="Liberation Sans">20</text>
<text x="185.3" y="71" font-size="4.8" text-anchor="middle" fill="#222" font-family="Liberation Sans">40</text>
<text x="210.3" y="71" font-size="4.8" text-anchor="middle" fill="#222" font-family="Liberation Sans">60</text>
<text x="235.3" y="71" font-size="4.8" text-anchor="middle" fill="#222" font-family="Liberation Sans">80</text>
<text x="260.3" y="71" font-size="4.8" text-anchor="middle" fill="#222" font-family="Liberation Sans">100</text>
<text x="285.3" y="71" font-size="4.8" text-anchor="middle" fill="#222" font-family="Liberation Sans">120</text>
<text x="310.3" y="71" font-size="4.8" text-anchor="middle" fill="#222" font-family="Liberation Sans">140</text>
<text x="335.3" y="71" font-size="4.8" text-anchor="middle" fill="#222" font-family="Liberation Sans">160</text>
<text x="360.3" y="71" font-size="4.8" text-anchor="middle" fill="#222" font-family="Liberation Sans">180</text>
<text x="385.3" y="71" font-size="4.8" text-anchor="middle" fill="#222" font-family="Liberation Sans">200</text>
<text x="410.3" y="71" font-size="4.8" text-anchor="middle" fill="#222" font-family="Liberation Sans">220</text>
<text x="435.3" y="71" font-size="4.8" text-anchor="middle" fill="#222" font-family="Liberation Sans">240</text>
<text x="460.3" y="71" font-size="4.8" text-anchor="middle" fill="#222" font-family="Liberation Sans">260</text>
<text x="485.3" y="71" font-size="4.8" text-anchor="middle" fill="#222" font-family="Liberation Sans">280</text>
<text x="510.3" y="71" font-size="4.8" text-anchor="middle" fill="#222" font-family="Liberation Sans">300</text>
<text x="535.3" y="71" font-size="4.8" text-anchor="middle" fill="#222" font-family="Liberation Sans">320</text>
<text x="560.3" y="71" font-size="4.8" text-anchor="middle" fill="#222" font-family="Liberation Sans">340</text>
<text transform="translate(40.9 366.2) rotate(-90)" font-size="4.8" text-anchor="middle" fill="#222" font-family="Liberation Sans">-100</text>
<text transform="translate(40.9 341.2) rotate(-90)" font-size="4.8" text-anchor="middle" fill="#222" font-family="Liberation Sans">-80</text>
<text transform="translate(40.9 316.2) rotate(-90)" font-size="4.8" text-anchor="middle" fill="#222" font-family="Liberation Sans">-60</text>
<text transform="translate(40.9 291.2) rotate(-90)" font-size="4.8" text-anchor="middle" fill="#222" font-family="Liberation Sans">-40</text>
<text transform="translate(40.9 266.2) rotate(-90)" font-size="4.8" text-anchor="middle" fill="#222" font-family="Liberation Sans">-20</text>
<text transform="translate(40.9 241.2) rotate(-90)" font-size="4.8" text-anchor="middle" fill="#222" font-family="Liberation Sans">0</text>
<text transform="translate(40.9 216.2) rotate(-90)" font-size="4.8" text-anchor="middle" fill="#222" font-family="Liberation Sans">20</text>
<text transform="translate(40.9 191.2) rotate(-90)" font-size="4.8" text-anchor="middle" fill="#222" font-family="Liberation Sans">40</text>
<text transform="translate(40.9 166.2) rotate(-90)" font-size="4.8" text-anchor="middle" fill="#222" font-family="Liberation Sans">60</text>
<text transform="translate(40.9 141.2) rotate(-90)" font-size="4.8" text-anchor="middle" fill="#222" font-family="Liberation Sans">80</text>
<text transform="translate(40.9 116.19999999999999) rotate(-90)" font-size="4.8" text-anchor="middle" fill="#222" font-family="Liberation Sans">100</text>
<text transform="translate(40.9 91.19999999999999) rotate(-90)" font-size="4.8" text-anchor="middle" fill="#222" font-family="Liberation Sans">120</text>
<path d="M489.4 74h2.6l-1.3 1.7z" fill="#111"/><path d="M44.3 199.2v2.6l1.7-1.3z" fill="#111"/>
</svg>
<div class="a" style="left:559px;top:77.5px;width:8px;height:288.5px;background:#fafafa"></div>
<div class="a" style="left:561.6px;top:193.5px;width:3.6px;height:97px;border-radius:2px;background:#0c0c0c"></div>
<div class="a" style="left:36px;top:365.8px;width:531px;height:8.4px;background:#efefef"></div>
<div class="a" style="left:47.5px;top:365.8px;width:484.5px;height:8.4px;background:#fafafa"></div>
<div class="a" style="left:148px;top:368.2px;width:270px;height:3.6px;border-radius:2px;background:#7d7d7d"></div>
<div class="a" style="left:532px;top:365.8px;width:35px;height:8.4px;background:#e6e6e6"></div>
<div class="t" style="left:541.6px;top:367.6px;font-size:6.45px;color:#111">10 &lt; 100</div>
<div class="a" style="left:36px;top:374.2px;width:531px;height:11.8px;background:#fff;border-top:0.8px solid #8e8e8e;border-bottom:0.6px solid #c8c8c8"></div>
<div class="t" style="left:38.6px;top:376.9px;font-size:6.6px;color:#0000d0;-webkit-text-stroke:0.12px #0000d0"><i>Kommando:</i> gp</div>
<div class="a" style="left:36px;top:385.4px;width:531px;height:13.3px;background:#ececec"></div>
<div class="t" style="left:36.6px;top:390.4px;font-size:6.6px;color:#111">Kommando:</div>
<div class="a" style="left:74px;top:387.8px;width:479.5px;height:9.2px;background:#fff;border-top:0.5px solid #d0d0d0"></div>
<div class="a" style="left:553.5px;top:386px;width:13.3px;height:12.4px;background:#f3f3f3;border:0.5px solid #cfcfcf"></div>
<svg class="a" style="left:556.4px;top:389.6px" width="7.6" height="5.4" viewBox="0 0 7.6 5.4"><rect x="0.3" y="0.3" width="7" height="4.8" fill="#fff" stroke="#555" stroke-width="0.6"/><rect x="0.3" y="0.3" width="7" height="1.7" fill="#222"/></svg>
<div class="a" style="left:567px;top:53.5px;width:10.5px;height:345px;background:#ececec"></div>
<div class="a" style="left:568px;top:170px;width:9.6px;height:72.3px;background:#2189f3;border-radius:1.5px 0 0 1.5px"></div>
<div class="a" style="left:568px;top:242.3px;width:9.6px;height:42.2px;background:#d2d2d2;border-radius:0 0 0 1.5px"></div>
<div class="t" style="left:572.9px;top:205.9px;font-size:6.7px;color:#fff;transform:translate(-50%,-50%) rotate(-90deg)">Eigenschafteneditor</div>
<div class="t" style="left:572.9px;top:264.2px;font-size:6.9px;color:#222;transform:translate(-50%,-50%) rotate(-90deg)">Layerliste</div>
<div class="a" style="left:577.5px;top:53.5px;width:150.5px;height:345px;background:#ececec"></div>
<div class="a" style="left:576.9px;top:64.5px;width:0.7px;height:334px;background:#d9d9d9"></div>
<div class="a" style="left:577.5px;top:64.5px;width:6.5px;height:334px;background:#f1f1f1"></div>
<div class="a" style="left:584px;top:60px;width:136px;height:62.5px;background:#e4e4e4;border-radius:0 0 3px 3px;box-shadow:0 0 0 0.4px #dadada"></div>
<div class="a" style="left:584px;top:131.5px;width:136px;height:225px;background:#e4e4e4;border-radius:3px 3px 3px 3px;box-shadow:0 0 0 0.4px #dadada"></div>
<div class="a" style="left:584px;top:367.4px;width:136px;height:24.9px;background:#e4e4e4;border-radius:3px 3px 3px 3px;box-shadow:0 0 0 0.4px #dadada"></div>
<div class="lab" style="right:101.70000000000005px;top:63.5px">Linienbreite:</div>
<div class="cmb" style="left:649.8px;width:66.5px;top:61.3px"><span style="display:inline-block;width:7px;border-top:0.6px solid #222;vertical-align:2px;margin:0 3.4px 0 1px"></span>Von Layer<b><svg style="position:absolute;left:0;top:0" width="8" height="8" viewBox="0 0 8 8"><path d="M2.6 3.1L4 1.7L5.4 3.1M2.6 5L4 6.4L5.4 5" fill="none" stroke="#fff" stroke-width="0.75" stroke-linecap="round" stroke-linejoin="round"/></svg></b></div>
<div class="lab" style="right:101.70000000000005px;top:75.3px">Linientyp:</div>
<div class="cmb" style="left:649.8px;width:66.5px;top:73.1px">Von Layer<b><svg style="position:absolute;left:0;top:0" width="8" height="8" viewBox="0 0 8 8"><path d="M2.6 3.1L4 1.7L5.4 3.1M2.6 5L4 6.4L5.4 5" fill="none" stroke="#fff" stroke-width="0.75" stroke-linecap="round" stroke-linejoin="round"/></svg></b></div>
<div class="lab" style="right:101.70000000000005px;top:87.0px">Linientypskalierung:</div>
<div class="inp" style="left:649.8px;width:66.5px;top:84.5px;color:#111">1</div>
<div class="lab" style="right:101.70000000000005px;top:98.7px">Reihenfolge:</div>
<div class="inp" style="left:649.8px;width:66.5px;top:96.2px;color:#111">0</div>
<div class="lab" style="right:101.70000000000005px;top:110.4px">Handle:</div>
<div class="inp" style="left:649.8px;width:66.5px;top:107.9px;color:#b4b4b4">0x39</div>
<div class="lab" style="right:118.0px;top:139.5px">Einfach:</div>
<div class="cmb" style="left:633.5px;width:82.79999999999995px;top:137.3px">Ja<b><svg style="position:absolute;left:0;top:0" width="8" height="8" viewBox="0 0 8 8"><path d="M2.6 3.1L4 1.7L5.4 3.1M2.6 5L4 6.4L5.4 5" fill="none" stroke="#fff" stroke-width="0.75" stroke-linecap="round" stroke-linejoin="round"/></svg></b></div>
<div class="lab" style="right:118.0px;top:151.2px">Text:</div>
<div class="inp" style="left:633.5px;width:82.79999999999995px;top:148.7px;color:#111">Lorem ipsum</div>
<div class="lab" style="right:118.0px;top:162.9px">Klartext:</div>
<div class="inp" style="left:633.5px;width:82.79999999999995px;top:160.4px;color:#b4b4b4">Lorem ipsum</div>
<div class="lab" style="right:118.0px;top:174.4px">Schriftart:</div>
<div class="cmb" style="left:633.5px;width:82.79999999999995px;top:172.20000000000002px">Arial<b><svg style="position:absolute;left:0;top:0" width="8" height="8" viewBox="0 0 8 8"><path d="M2.6 3.1L4 1.7L5.4 3.1M2.6 5L4 6.4L5.4 5" fill="none" stroke="#fff" stroke-width="0.75" stroke-linecap="round" stroke-linejoin="round"/></svg></b></div>
<div class="lab" style="right:118.0px;top:186.0px">Texthöhe:</div>
<div class="inp" style="left:633.5px;width:82.79999999999995px;top:183.5px;color:#111">10</div>
<div class="lab" style="right:118.0px;top:197.6px">Textbreite:</div>
<div class="inp" style="left:633.5px;width:82.79999999999995px;top:195.1px;color:#111">0</div>
<div class="lab" style="right:118.0px;top:209.3px">Textwinkel:</div>
<div class="inp" style="left:633.5px;width:82.79999999999995px;top:206.8px;color:#111">0</div>
<div class="lab" style="right:118.0px;top:221.0px">X Skalierung:</div>
<div class="inp" style="left:633.5px;width:82.79999999999995px;top:218.5px;color:#111">1</div>
<div class="lab" style="right:118.0px;top:232.7px">Fett:</div>
<div class="cmb" style="left:633.5px;width:82.79999999999995px;top:230.5px">Nein<b><svg style="position:absolute;left:0;top:0" width="8" height="8" viewBox="0 0 8 8"><path d="M2.6 3.1L4 1.7L5.4 3.1M2.6 5L4 6.4L5.4 5" fill="none" stroke="#fff" stroke-width="0.75" stroke-linecap="round" stroke-linejoin="round"/></svg></b></div>
<div class="lab" style="right:118.0px;top:244.4px">Kursiv:</div>
<div class="cmb" style="left:633.5px;width:82.79999999999995px;top:242.20000000000002px">Nein<b><svg style="position:absolute;left:0;top:0" width="8" height="8" viewBox="0 0 8 8"><path d="M2.6 3.1L4 1.7L5.4 3.1M2.6 5L4 6.4L5.4 5" fill="none" stroke="#fff" stroke-width="0.75" stroke-linecap="round" stroke-linejoin="round"/></svg></b></div>
<div class="lab" style="right:118.0px;top:256.1px">Linienabstand:</div>
<div class="inp" style="left:633.5px;width:82.79999999999995px;top:253.60000000000002px;color:#111">1</div>
<div class="lab" style="right:118.0px;top:268.1px">Rückwärts:</div>
<div class="cmb" style="left:633.5px;width:82.79999999999995px;top:265.90000000000003px">Nein<b><svg style="position:absolute;left:0;top:0" width="8" height="8" viewBox="0 0 8 8"><path d="M2.6 3.1L4 1.7L5.4 3.1M2.6 5L4 6.4L5.4 5" fill="none" stroke="#fff" stroke-width="0.75" stroke-linecap="round" stroke-linejoin="round"/></svg></b></div>
<div class="lab" style="right:118.0px;top:280.1px">Auf dem Kopf:</div>
<div class="cmb" style="left:633.5px;width:82.79999999999995px;top:277.90000000000003px">Nein<b><svg style="position:absolute;left:0;top:0" width="8" height="8" viewBox="0 0 8 8"><path d="M2.6 3.1L4 1.7L5.4 3.1M2.6 5L4 6.4L5.4 5" fill="none" stroke="#fff" stroke-width="0.75" stroke-linecap="round" stroke-linejoin="round"/></svg></b></div>
<div class="lab" style="right:118.0px;top:301.1px">X:</div>
<div class="inp" style="left:633.5px;width:82.79999999999995px;top:298.6px;color:#111">100</div>
<div class="lab" style="right:118.0px;top:312.4px">Y:</div>
<div class="inp" style="left:633.5px;width:82.79999999999995px;top:309.9px;color:#111">80</div>
<div class="lab" style="right:118.0px;top:333.0px">Horizontal:</div>
<div class="cmb" style="left:633.5px;width:82.79999999999995px;top:330.8px">Links<b><svg style="position:absolute;left:0;top:0" width="8" height="8" viewBox="0 0 8 8"><path d="M2.6 3.1L4 1.7L5.4 3.1M2.6 5L4 6.4L5.4 5" fill="none" stroke="#fff" stroke-width="0.75" stroke-linecap="round" stroke-linejoin="round"/></svg></b></div>
<div class="a" style="left:632.6px;top:342.59999999999997px;width:86.6px;height:9.6px;background:#f6bdbd"></div>
<div class="a" style="left:632px;top:342.2px;width:87.2px;height:10.6px;border-top:0.8px solid #e87070;border-bottom:0.8px solid #e87070"></div>
<div class="cmb" style="left:633.5px;width:82.79999999999995px;top:342.5px;background:transparent;box-shadow:none;border-radius:0">Oben<b><svg style="position:absolute;left:0;top:0" width="8" height="8" viewBox="0 0 8 8"><path d="M2.6 3.1L4 1.7L5.4 3.1M2.6 5L4 6.4L5.4 5" fill="none" stroke="#fff" stroke-width="0.75" stroke-linecap="round" stroke-linejoin="round"/></svg></b></div>
<div class="a" style="left:632.8px;top:340.8px;width:0;height:13.6px;border-left:0.8px solid #e05050"></div>
<div class="a" style="left:716.2px;top:340.8px;width:0;height:13.6px;border-left:0.8px solid #e05050"></div>
<div class="lab" style="right:118.0px;top:344.7px">Vertikal:</div>
<div class="t" style="left:587.8px;top:126px;font-size:5.95px;color:#222">Spezifische Eigenschaften</div>
<div class="t" style="left:588px;top:290px;font-size:6.5px;font-weight:bold;color:#111">Text Position</div>
<div class="t" style="left:588px;top:322px;font-size:6.5px;font-weight:bold;color:#111">Ausrichtung</div>
<div class="t" style="left:587.8px;top:360.1px;font-size:6.05px;color:#222">Benutzerdefiniert</div>
<div class="a" style="left:702.4px;top:374.6px;width:11.4px;height:11px;background:#fbfbfb;border:0.5px solid #c6c6c6;border-radius:1px"></div>
<svg class="a" style="left:705.6px;top:377.6px" width="5" height="5" viewBox="0 0 5 5"><path d="M2.5 0.4V4.6M0.4 2.5H4.6" stroke="#c01818" stroke-width="1.5"/></svg>
<div class="a" style="left:577.5px;top:53.5px;width:150.5px;height:11px;background:linear-gradient(#dedede,#cfcfcf);border-top:0.6px solid #c4c4c4;border-bottom:0.6px solid #bdbdbd"></div>
<div class="t" style="left:634.6px;top:56.8px;font-size:6px;color:#333">Eigenschafteneditor</div>
<svg class="a" style="left:578px;top:55px" width="20" height="9" viewBox="578 55 20 9"><circle cx="582" cy="59.4" r="3.5" fill="#3a3a3a"/><path d="M580.6 58L583.4 60.8M583.4 58L580.6 60.8" stroke="#e8e8e8" stroke-width="0.9"/><circle cx="591" cy="59.4" r="3.5" fill="#3a3a3a"/><rect x="589.5" y="58" width="3" height="2.8" fill="none" stroke="#e8e8e8" stroke-width="0.7"/></svg>
<div class="a" style="left:722.6px;top:119.3px;width:3px;height:277.5px;border-radius:1.5px;background:#6b6b6b"></div>
<svg class="a" style="left:727px;top:53.5px" width="23" height="345.5" viewBox="727 53.5 23 345.5"><rect x="728" y="53.5" width="22" height="345.5" fill="url(#rtbg)"/><defs><linearGradient id="rtbg" x1="0" y1="0" x2="1" y2="0"><stop offset="0" stop-color="#e2e2e2"/><stop offset="1" stop-color="#cfcfcf"/></linearGradient></defs><path d="M727.6 53.5V399" stroke="#f4f4f4" stroke-width="0.8"/><path d="M733 58.3H746" stroke="#8a8a8a" stroke-width="0.7" stroke-dasharray="0.8 1.6"/><path d="M730.4 130.6H748.6M730.4 205.3H748.6" stroke="#a4a4a4" stroke-width="0.6" stroke-dasharray="1.4 1.1"/><rect x="728.6" y="60.3" width="22" height="20.4" rx="2" fill="#b6b6b6"/><rect x="731.4" y="63.4" width="13.8" height="13.4" fill="#fdfdfd" stroke="#7c7c7c" stroke-width="0.6"/><rect x="731.4" y="63.4" width="13.8" height="2.3" fill="#0a0a0a"/><rect x="731.9" y="63.8" width="1.1" height="1.3" fill="#fff"/><path d="M735.3 71.80000000000001L738.9 68.4L741.6999999999999 69.2L741.5 72.0L737.9 75.0L735.3 74.2Z" fill="#f2b0b0" stroke="#8a8a8a" stroke-width="0.5"/><path d="M735.3 71.80000000000001L737.9 72.4L737.9 75.0L735.3 74.2Z" fill="#9a9a9a"/><rect x="731.4" y="86.6" width="13.8" height="13.4" fill="#fdfdfd" stroke="#7c7c7c" stroke-width="0.6"/><rect x="731.4" y="86.6" width="13.8" height="2.3" fill="#0a0a0a"/><rect x="731.9" y="87.0" width="1.1" height="1.3" fill="#fff"/><rect x="734.9" y="92.19999999999999" width="4.6" height="4" fill="#ead9a0" stroke="#9c8a50" stroke-width="0.5"/><rect x="737.3" y="94.19999999999999" width="4.6" height="4" fill="#f0e2b0" stroke="#9c8a50" stroke-width="0.5"/><rect x="731.4" y="109.7" width="13.8" height="13.4" fill="#fdfdfd" stroke="#7c7c7c" stroke-width="0.6"/><rect x="731.4" y="109.7" width="13.8" height="2.3" fill="#0a0a0a"/><rect x="731.9" y="110.10000000000001" width="1.1" height="1.3" fill="#fff"/><rect x="733.6999999999999" y="115.7" width="9.2" height="5.6" fill="#f2f6fc" stroke="#a8bcdc" stroke-width="0.6"/><rect x="728.6" y="135.0" width="22" height="20.4" rx="2" fill="#b6b6b6"/><rect x="731.4" y="138.1" width="13.8" height="13.4" fill="#fdfdfd" stroke="#7c7c7c" stroke-width="0.6"/><rect x="731.4" y="138.1" width="13.8" height="2.3" fill="#0a0a0a"/><rect x="731.9" y="138.5" width="1.1" height="1.3" fill="#fff"/><rect x="732.8" y="141.79999999999998" width="1.6" height="1.5" fill="#111"/><path d="M735.1999999999999 142.54999999999998H743.8" stroke="#555" stroke-width="0.5"/><rect x="732.8" y="144.29999999999998" width="1.6" height="1.5" fill="#111"/><path d="M735.1999999999999 145.04999999999998H743.8" stroke="#555" stroke-width="0.5"/><rect x="732.8" y="146.79999999999998" width="1.6" height="1.5" fill="#111"/><path d="M735.1999999999999 147.54999999999998H743.8" stroke="#555" stroke-width="0.5"/><rect x="732.8" y="149.29999999999998" width="1.6" height="1.5" fill="#111"/><path d="M735.1999999999999 150.04999999999998H743.8" stroke="#555" stroke-width="0.5"/><rect x="731.4" y="161.3" width="13.8" height="13.4" fill="#fdfdfd" stroke="#7c7c7c" stroke-width="0.6"/><rect x="731.4" y="161.3" width="13.8" height="2.3" fill="#0a0a0a"/><rect x="731.9" y="161.70000000000002" width="1.1" height="1.3" fill="#fff"/><path d="M734.6999999999999 166.3H741.9L739.1999999999999 169.3V172.70000000000002H737.4V169.3Z" fill="#9a9a9a" stroke="#6e6e6e" stroke-width="0.4"/><rect x="731.4" y="184.4" width="13.8" height="13.4" fill="#fdfdfd" stroke="#7c7c7c" stroke-width="0.6"/><rect x="731.4" y="184.4" width="13.8" height="2.3" fill="#0a0a0a"/><rect x="731.9" y="184.8" width="1.1" height="1.3" fill="#fff"/><rect x="735.9" y="190.0" width="5.6" height="5" fill="#c8c8c8" stroke="#666" stroke-width="0.5"/><path d="M734.3 192.4H735.9M737.3 191.4H740.3M737.3 193.4H740.3" stroke="#c03030" stroke-width="0.6"/><path d="M734.0999999999999 189.8V195.20000000000002" stroke="#d06060" stroke-width="0.5"/><rect x="728.6" y="209.70000000000002" width="22" height="20.4" rx="2" fill="#b6b6b6"/><rect x="731.4" y="212.8" width="13.8" height="13.4" fill="#fdfdfd" stroke="#7c7c7c" stroke-width="0.6"/><rect x="731.4" y="212.8" width="13.8" height="2.3" fill="#0a0a0a"/><rect x="731.9" y="213.20000000000002" width="1.1" height="1.3" fill="#fff"/><path d="M733.0 217.0H743.0" stroke="#9a9a9a" stroke-width="0.6" stroke-dasharray="1.6 0.6"/><path d="M733.0 219.3H740.4" stroke="#9a9a9a" stroke-width="0.6" stroke-dasharray="1.6 0.6"/><path d="M733.0 221.6H743.0" stroke="#9a9a9a" stroke-width="0.6" stroke-dasharray="1.6 0.6"/><path d="M733.0 223.9H740.4" stroke="#9a9a9a" stroke-width="0.6" stroke-dasharray="1.6 0.6"/><rect x="731.4" y="236.0" width="13.8" height="13.4" fill="#fdfdfd" stroke="#7c7c7c" stroke-width="0.6"/><rect x="731.4" y="236.0" width="13.8" height="2.3" fill="#0a0a0a"/><rect x="731.9" y="236.4" width="1.1" height="1.3" fill="#fff"/><rect x="735.3" y="241.0" width="6.4" height="7.2" rx="0.5" fill="#d8b070" stroke="#9c7430" stroke-width="0.5"/><rect x="736.3" y="242.2" width="4.4" height="5.2" fill="#f4f4f0"/><rect x="737.0999999999999" y="240.2" width="2.8" height="1.6" fill="#8a8a8a"/></svg>
<div class="a" style="left:0;top:398.8px;width:750px;height:23.2px;background:#dcdcdc;border-top:0.6px solid #c6c6c6"></div>
<div class="t" style="left:1.2px;top:403.6px;font-size:5.2px;color:#000;-webkit-text-stroke:0.1px #000">284.4,32.4</div>
<div class="t" style="left:1.2px;top:413.6px;font-size:5.2px;color:#000;-webkit-text-stroke:0.1px #000">@184.4,-27.6</div>
<div class="a" style="left:126.5px;top:401px;width:0;height:21px;border-left:0.6px solid #a4a4a4"></div>
<div class="t" style="left:128.4px;top:403.6px;font-size:5.2px;color:#000;-webkit-text-stroke:0.1px #000">286.2396&lt;6°</div>
<div class="t" style="left:128.4px;top:413.6px;font-size:5.2px;color:#000;-webkit-text-stroke:0.1px #000">@186.4541&lt;351°</div>
<div class="t" style="right:399.6px;top:405.8px;font-size:5.1px;color:#000;-webkit-text-stroke:0.08px #000">Element oder Bereich selektieren</div>
<div class="t" style="right:399.6px;top:411.8px;font-size:5.1px;color:#000;-webkit-text-stroke:0.08px #000">Element oder Referenzpunkt verschieben</div>
<div class="t" style="left:474.8px;top:405.8px;font-size:5.1px;color:#000;-webkit-text-stroke:0.08px #000">Selektierte Objekte:</div>
<div class="t" style="left:474.8px;top:411.8px;font-size:5.1px;color:#000;-webkit-text-stroke:0.08px #000">1 Text auf Layer "0".</div>
<svg class="a" style="left:358px;top:402px" width="11" height="17" viewBox="358 402 11 17"><rect x="359.4" y="403" width="8.4" height="14.6" rx="3.6" fill="#fff" stroke="#777" stroke-width="0.6"/><path d="M359.4 409.6H367.8M363.6 403V409.6" stroke="#888" stroke-width="0.5"/><rect x="362.8" y="404.6" width="1.6" height="3.2" rx="0.8" fill="#fff" stroke="#555" stroke-width="0.5"/></svg>
<div class="a" style="left:254px;top:410.4px;width:1.2px;height:1.2px;border-radius:1px;background:#bdbdbd"></div>
<div class="a" style="left:470.6px;top:410.4px;width:1.2px;height:1.2px;border-radius:1px;background:#bdbdbd"></div>
<svg class="a" style="left:650px;top:320px" width="60" height="60" viewBox="650 320 60 60"><defs><radialGradient id="halo" cx="0.5" cy="0.5" r="0.5"><stop offset="0" stop-color="#ffffff" stop-opacity="0.30"/><stop offset="0.7" stop-color="#ffffff" stop-opacity="0.42"/><stop offset="0.8" stop-color="#eef1f5" stop-opacity="0.55"/><stop offset="0.88" stop-color="#9fb0c4" stop-opacity="0.85"/><stop offset="0.93" stop-color="#a4b4c8" stop-opacity="0.8"/><stop offset="0.97" stop-color="#c0ccd8" stop-opacity="0.4"/><stop offset="1" stop-color="#d8dee6" stop-opacity="0"/></radialGradient></defs><circle cx="674.9" cy="347.3" r="20.2" fill="url(#halo)"/><path d="M675.30 347.60 L675.30 359.00 L677.80 356.70 L679.60 360.90 L681.50 360.10 L679.80 356.00 L683.20 356.00Z" fill="#f4f4f4" stroke="#0a0a0a" stroke-width="1.0" stroke-linejoin="round"/></svg>
</body></html>
